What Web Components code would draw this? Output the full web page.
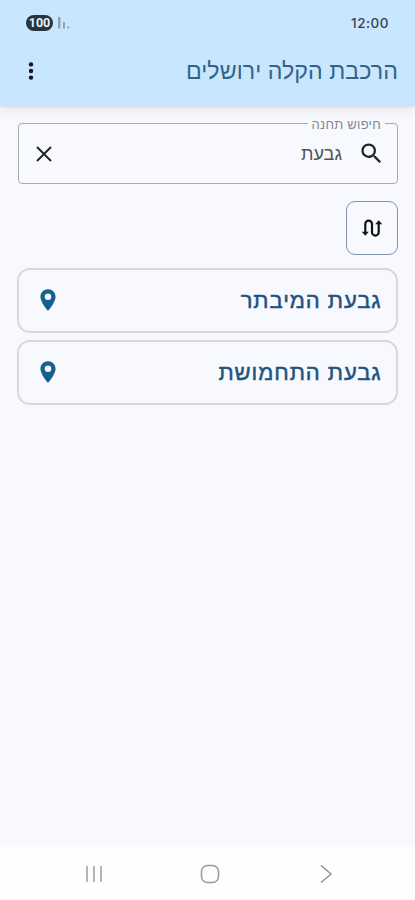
<!DOCTYPE html>
<html lang="he" dir="rtl">
<head>
<meta charset="utf-8">
<title>הרכבת הקלה ירושלים</title>
<style>
html,body{margin:0;height:100%}
body{font-family:"Liberation Sans",Arial,sans-serif;background:#f8f9ff;overflow:hidden}
</style>
</head>
<body>
<phone-screen>
  <app-header slot="top"><status-bar></status-bar><app-bar>הרכבת הקלה ירושלים</app-bar></app-header>
  <search-field label="חיפוש תחנה">גבעת</search-field>
  <route-button></route-button>
  <station-list>
    <station-card>גבעת המיבתר</station-card>
    <station-card>גבעת התחמושת</station-card>
  </station-list>
  <nav-bar slot="bottom"></nav-bar>
</phone-screen>
<script>
function define(name, html) {
  const t = document.createElement('template');
  t.innerHTML = html;
  customElements.define(name, class extends HTMLElement {
    constructor() {
      super();
      const root = this.attachShadow({mode: 'open'});
      root.append(t.content.cloneNode(true));
      const label = root.querySelector('[data-label]');
      if (label) label.textContent = this.getAttribute('label');
    }
  });
}
define('phone-screen', `<style>
:host{display:flex;flex-direction:column;width:415px;height:900px;background:#f8f9ff}
main{flex:1;display:flex;flex-direction:column;padding:9px 17px 0}
</style><slot name="top"></slot><main><slot></slot></main><slot name="bottom"></slot>`);
define('app-header', `<style>
:host{display:flex;flex-direction:column;height:106px;box-sizing:border-box;background:#c9e6ff;box-shadow:0 1px 2px #00000014,0 3px 12px #00000018}
</style><slot></slot>`);
define('status-bar', `<style>
:host{display:flex;align-items:center;justify-content:space-between;height:46px;padding:0 26px;direction:ltr;box-sizing:border-box}
.left{display:flex;align-items:center;gap:5px}
.battery{width:27px;height:16px;border-radius:8px;background:#27333e;color:#e4f3ff;font:700 12.5px/16px Roboto,sans-serif;text-align:center}
.time{font:500 13.5px/16px Inter,sans-serif;color:#34434f;letter-spacing:.5px}
svg{display:block}
</style><div class="left"><div class="battery">100</div><svg width="12" height="12" viewBox="0 0 12 12"><g fill="#8ca2b3"><rect x="0" y="0" width="2.4" height="11.5"/><rect x="5" y="5" width="2" height="6.5"/><rect x="9.2" y="9.5" width="2" height="2"/></g></svg></div><span class="time">12:00</span>`);
define('app-bar', `<style>
:host{display:flex;justify-content:space-between;align-items:center;height:50px;padding:0 17px 0 19px;color:#346388}
.title{font-size:23.2px;line-height:32px;white-space:nowrap;letter-spacing:.05px}
svg{display:block}
</style><span class="title"><slot></slot></span><svg width="24" height="24" viewBox="0 0 24 24" fill="#111820"><circle cx="12" cy="5.400" r="2.200"/><circle cx="12" cy="12" r="2.200"/><circle cx="12" cy="18.600" r="2.200"/></svg>`);
define('search-field', `<style>
:host{display:block;height:69px}
fieldset{box-sizing:border-box;width:380px;height:69px;margin:0;padding:0 12px 0 12px;border:1.500px solid #a6a9ae;border-radius:4px;min-width:0}
legend{font-size:13px;line-height:17px;padding:1px 4px 0;color:#84868b;height:16px;box-sizing:border-box;white-space:nowrap;letter-spacing:.25px}
.row{display:flex;align-items:center;height:45px}
.value{flex:1;font-size:18px;line-height:24px;color:#515458;margin-right:16px}
svg{display:block}
</style><fieldset><legend data-label></legend><div class="row"><svg width="27" height="27" viewBox="0 0 24 24" fill="#202327"><path d="M15.500 14h-.79l-.28-.27A6.470 6.470 0 0 0 16 9.500 6.500 6.500 0 1 0 9.500 16c1.610 0 3.090-.59 4.230-1.570l.27.28v.79l5 4.990L20.490 19zm-6 0a4.500 4.500 0 1 1 0-9 4.500 4.500 0 0 1 0 9"/></svg><span class="value"><slot></slot></span><svg width="26" height="26" viewBox="0 0 26 26" fill="none" stroke="#202327" stroke-width="1.900"><path d="M6 6L20 20M20 6L6 20"/></svg></div></fieldset>`);
define('route-button', `<style>
:host{display:flex;align-items:center;justify-content:center;width:52px;height:54px;box-sizing:border-box;border:1.500px solid #8295ac;border-radius:9px;margin-top:17px}
svg{display:block}
</style><svg width="26" height="26" viewBox="0 0 26 26"><path d="M6.300 17V9a3.350 3.350 0 0 1 6.700 0v8.200a3.350 3.350 0 0 0 6.700 0V9" fill="none" stroke="#111418" stroke-width="2.200"/><path d="M2.800 16.800h7l-3.500 4zM16.200 9.300h7l-3.500-4z" fill="#111418"/></svg>`);
define('station-list', `<style>:host{display:flex;flex-direction:column;gap:7px;margin-top:13px}</style><slot></slot>`);
define('station-card', `<style>
:host{display:flex;align-items:center;justify-content:space-between;box-sizing:border-box;height:65px;padding:0 14.500px 1px 16px;border:2px solid #d6d8de;border-radius:13px;color:#1f5380}
.name{font-size:22px;-webkit-text-stroke:.5px #1f5380;letter-spacing:.93px;line-height:30px;padding-top:2px;white-space:nowrap}
svg{display:block}
</style><span class="name"><slot></slot></span><svg width="26" height="26" viewBox="0 0 24 24" fill="#17608b"><path fill-rule="evenodd" d="M12 2C8.130 2 5 5.130 5 9c0 5.250 7 13 7 13s7-7.750 7-13c0-3.870-3.130-7-7-7m0 10a3 3 0 1 1 0-6 3 3 0 0 1 0 6"/></svg>`);
define('nav-bar', `<style>
:host{display:flex;justify-content:space-between;align-items:center;direction:ltr;height:53px;box-sizing:border-box;padding:0 79px 0 84px;background:#fefefe}
svg{display:block}
</style><svg width="20" height="20" viewBox="0 0 20 20" stroke="#a8a8a8" stroke-width="1.700"><path d="M3 2V18M10 2V18M17 2V18"/></svg><svg width="20" height="20" viewBox="0 0 20 20" fill="none" stroke="#999" stroke-width="1.500"><rect x="1.500" y="1.500" width="17" height="17" rx="6"/></svg><svg width="20" height="20" viewBox="0 0 20 20" fill="none" stroke="#929292" stroke-width="1.500"><path d="M5 1.500L15 10L5 18.500"/></svg>`);
</script>
</body>
</html>
